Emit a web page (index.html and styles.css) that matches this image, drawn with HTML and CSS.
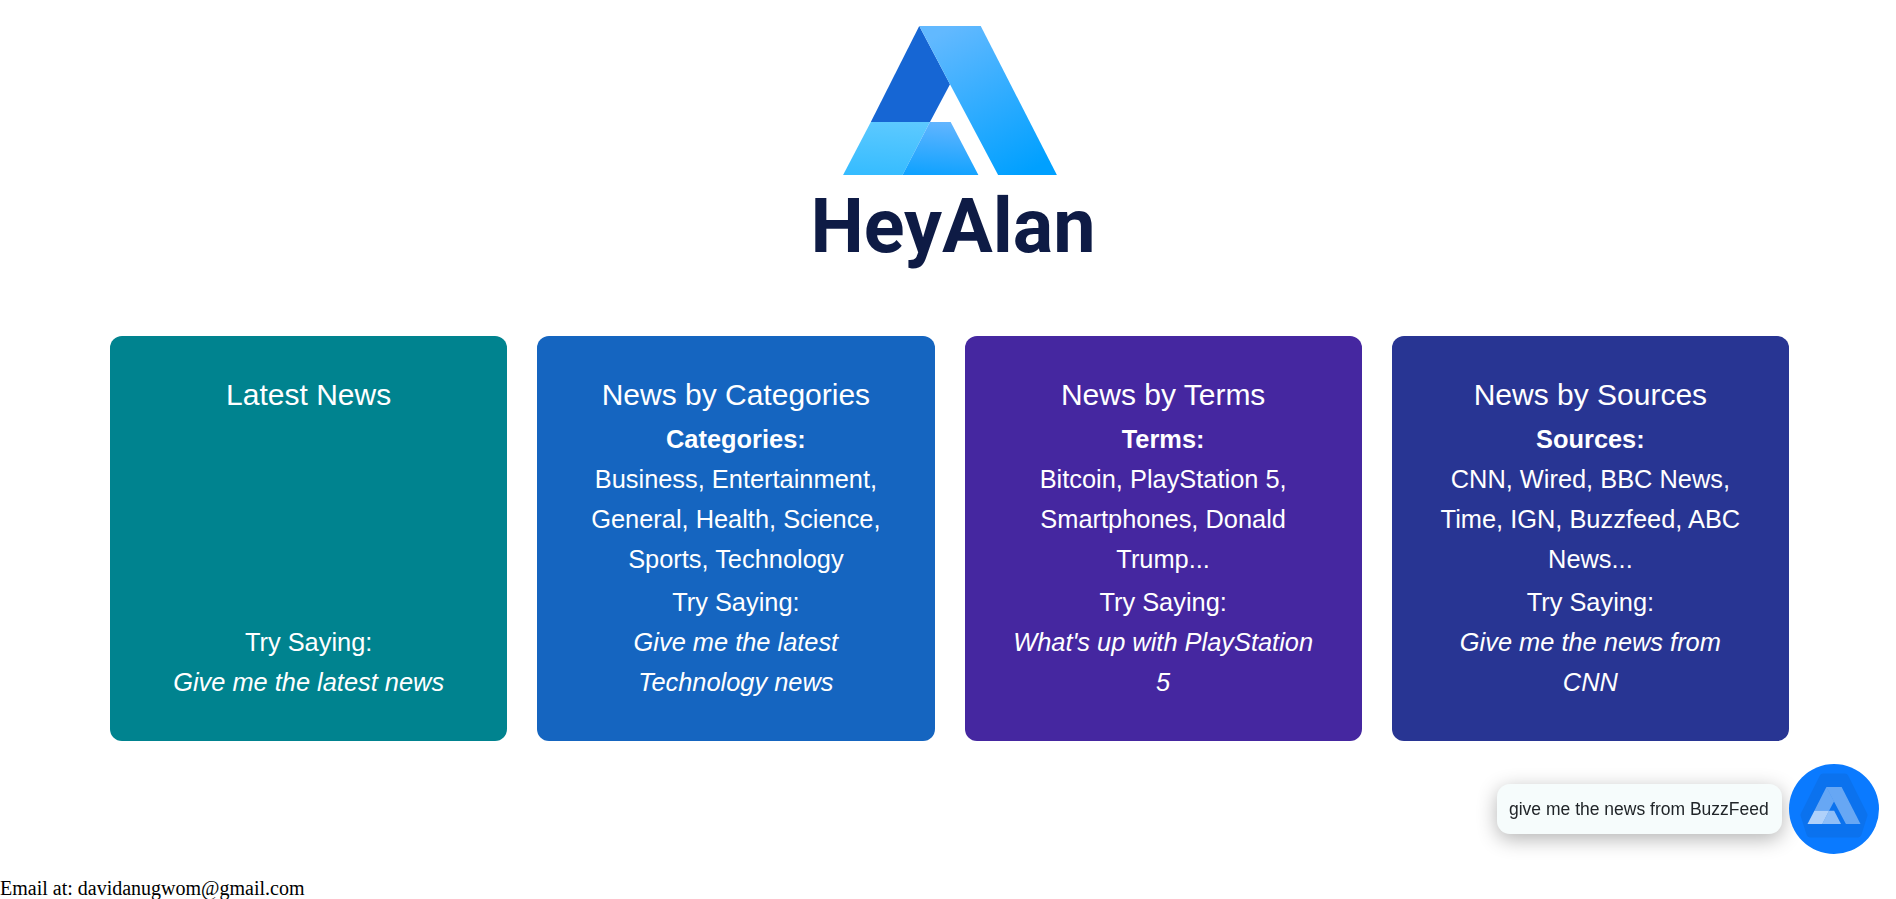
FILE: index.html
```html
<!DOCTYPE html>
<html lang="en">
<head>
    <meta charset="UTF-8">
    <meta name="viewport" content="width=device-width, initial-scale=1.0">
    <title>HeyAlan</title>
    <link rel="stylesheet" href="styles.css">
</head>
<body>
    <header class="logo">
        <svg class="logo-mark" viewBox="0 0 640 446" aria-hidden="true">
            <defs>
                <linearGradient id="bandGrad" x1="0.25" y1="0" x2="0.75" y2="1">
                    <stop offset="0" stop-color="#62b9ff"/>
                    <stop offset="1" stop-color="#00a0ff"/>
                </linearGradient>
                <linearGradient id="midGrad" x1="0.5" y1="0" x2="0.4" y2="1">
                    <stop offset="0" stop-color="#62b5ff"/>
                    <stop offset="1" stop-color="#10a2ff"/>
                </linearGradient>
                <linearGradient id="lightGrad" x1="0.5" y1="0" x2="0.4" y2="1">
                    <stop offset="0" stop-color="#5cc9ff"/>
                    <stop offset="1" stop-color="#36bcff"/>
                </linearGradient>
            </defs>
            <polygon points="228,0 320,174 260,287 83,287" fill="#1666d4"/>
            <polygon points="228,0 412,0 640,446 464,446 320,174" fill="url(#bandGrad)"/>
            <polygon points="83,287 260,287 178,446 0,446" fill="url(#lightGrad)"/>
            <polygon points="260,287 322,287 405,446 178,446" fill="url(#midGrad)"/>
        </svg>
        <div class="logo-name">HeyAlan</div>
    </header>

    <!-- command cards -->
    <section class="cards">
        <div class="card card-teal">
            <h3 class="card-title">Latest News</h3>
            <div class="card-hint">
                <p>Try Saying:</p>
                <p><em>Give me the latest news</em></p>
            </div>
        </div>
        <div class="card card-blue">
            <h3 class="card-title">News by Categories</h3>
            <div class="card-info">
                <p><strong>Categories:</strong></p>
                <p>Business, Entertainment, General, Health, Science, Sports, Technology</p>
            </div>
            <div class="card-hint">
                <p>Try Saying:</p>
                <p><em>Give me the latest Technology news</em></p>
            </div>
        </div>
        <div class="card card-purple">
            <h3 class="card-title">News by Terms</h3>
            <div class="card-info">
                <p><strong>Terms:</strong></p>
                <p>Bitcoin, PlayStation 5, Smartphones, Donald Trump...</p>
            </div>
            <div class="card-hint">
                <p>Try Saying:</p>
                <p><em>What's up with PlayStation 5</em></p>
            </div>
        </div>
        <div class="card card-indigo">
            <h3 class="card-title">News by Sources</h3>
            <div class="card-info">
                <p><strong>Sources:</strong></p>
                <p>CNN, Wired, BBC News, Time, IGN, Buzzfeed, ABC News...</p>
            </div>
            <div class="card-hint">
                <p>Try Saying:</p>
                <p><em>Give me the news from CNN</em></p>
            </div>
        </div>
    </section>

    <footer class="contact">Email at: davidanugwom@gmail.com</footer>

    <div class="assistant">
        <div class="assistant-bubble">give me the news from BuzzFeed</div>
        <button class="assistant-btn" aria-label="Assistant">
            <svg class="assistant-icon" viewBox="0 0 90 90" aria-hidden="true">
                <path d="M34 13 H56 L75 51 L69 70 H21 L15 51 Z" fill="#0b72ee" stroke="#0b72ee" stroke-width="7" stroke-linejoin="round"/>
                <g transform="translate(18.5 23) scale(0.0828)">
                    <polygon points="228,0 320,174 260,287 83,287" fill="#fff" fill-opacity="0.38"/>
                    <polygon points="228,0 412,0 640,446 464,446 320,174" fill="#fff" fill-opacity="0.38"/>
                    <polygon points="83,287 260,287 178,446 0,446" fill="#fff" fill-opacity="0.68"/>
                    <polygon points="260,287 322,287 405,446 178,446" fill="#fff" fill-opacity="0.54"/>
                </g>
            </svg>
        </button>
    </div>
</body>
</html>
```

FILE: styles.css
```css
html, body {
    height: 100%;
}

body {
    margin: 0;
    font-family: "Liberation Sans", Arial, sans-serif;
    background-color: #fff;
    display: flex;
    flex-direction: column;
    overflow: hidden;
}

.logo {
    display: flex;
    flex-direction: column;
    align-items: center;
    padding-top: 26px;
}

.logo-mark {
    display: block;
    width: 214px;
    height: 149px;
    margin-left: 4px;
}

.logo-name {
    font-family: Roboto, sans-serif;
    font-weight: 700;
    font-size: 75.5px;
    line-height: 89px;
    color: #0e1b45;
    margin: 7px 0 0 10px;
}

.cards {
    display: grid;
    grid-template-columns: repeat(4, 1fr);
    gap: 30px;
    padding: 65px 107px 0 110px;
}

.card {
    display: flex;
    flex-direction: column;
    height: 405px;
    box-sizing: border-box;
    padding: 40px 45px 39px;
    border-radius: 12px;
    color: #fff;
    text-align: center;
    font-size: 25.4px;
    line-height: 40px;
}

.card p {
    margin: 0;
}

.card-title {
    margin: 0 0 5px;
    font-size: 30px;
    font-weight: 400;
    line-height: 38px;
}

.card-hint {
    margin-top: auto;
}

.card-teal { background-color: #00838f; }
.card-blue { background-color: #1565c0; }
.card-purple { background-color: #4527a0; }
.card-indigo { background-color: #283593; }

.contact {
    margin-top: auto;
    font-family: "Liberation Serif", "Times New Roman", serif;
    font-size: 20px;
    line-height: 22px;
    color: #000;
}

.assistant {
    position: fixed;
    right: 17px;
    bottom: 45px;
    display: flex;
    align-items: center;
    gap: 7px;
}

.assistant-bubble {
    box-sizing: border-box;
    width: 285px;
    height: 50px;
    padding: 0 12px;
    border-radius: 13px;
    background-color: #f6fcfc;
    color: #212529;
    font-size: 17.5px;
    line-height: 50px;
    white-space: nowrap;
    box-shadow: 0 5px 20px rgba(0, 0, 0, 0.3);
}

.assistant-btn {
    width: 90px;
    height: 90px;
    padding: 0;
    border: none;
    border-radius: 50%;
    background-color: #0a7aff;
}

.assistant-icon {
    display: block;
    width: 90px;
    height: 90px;
}
```
